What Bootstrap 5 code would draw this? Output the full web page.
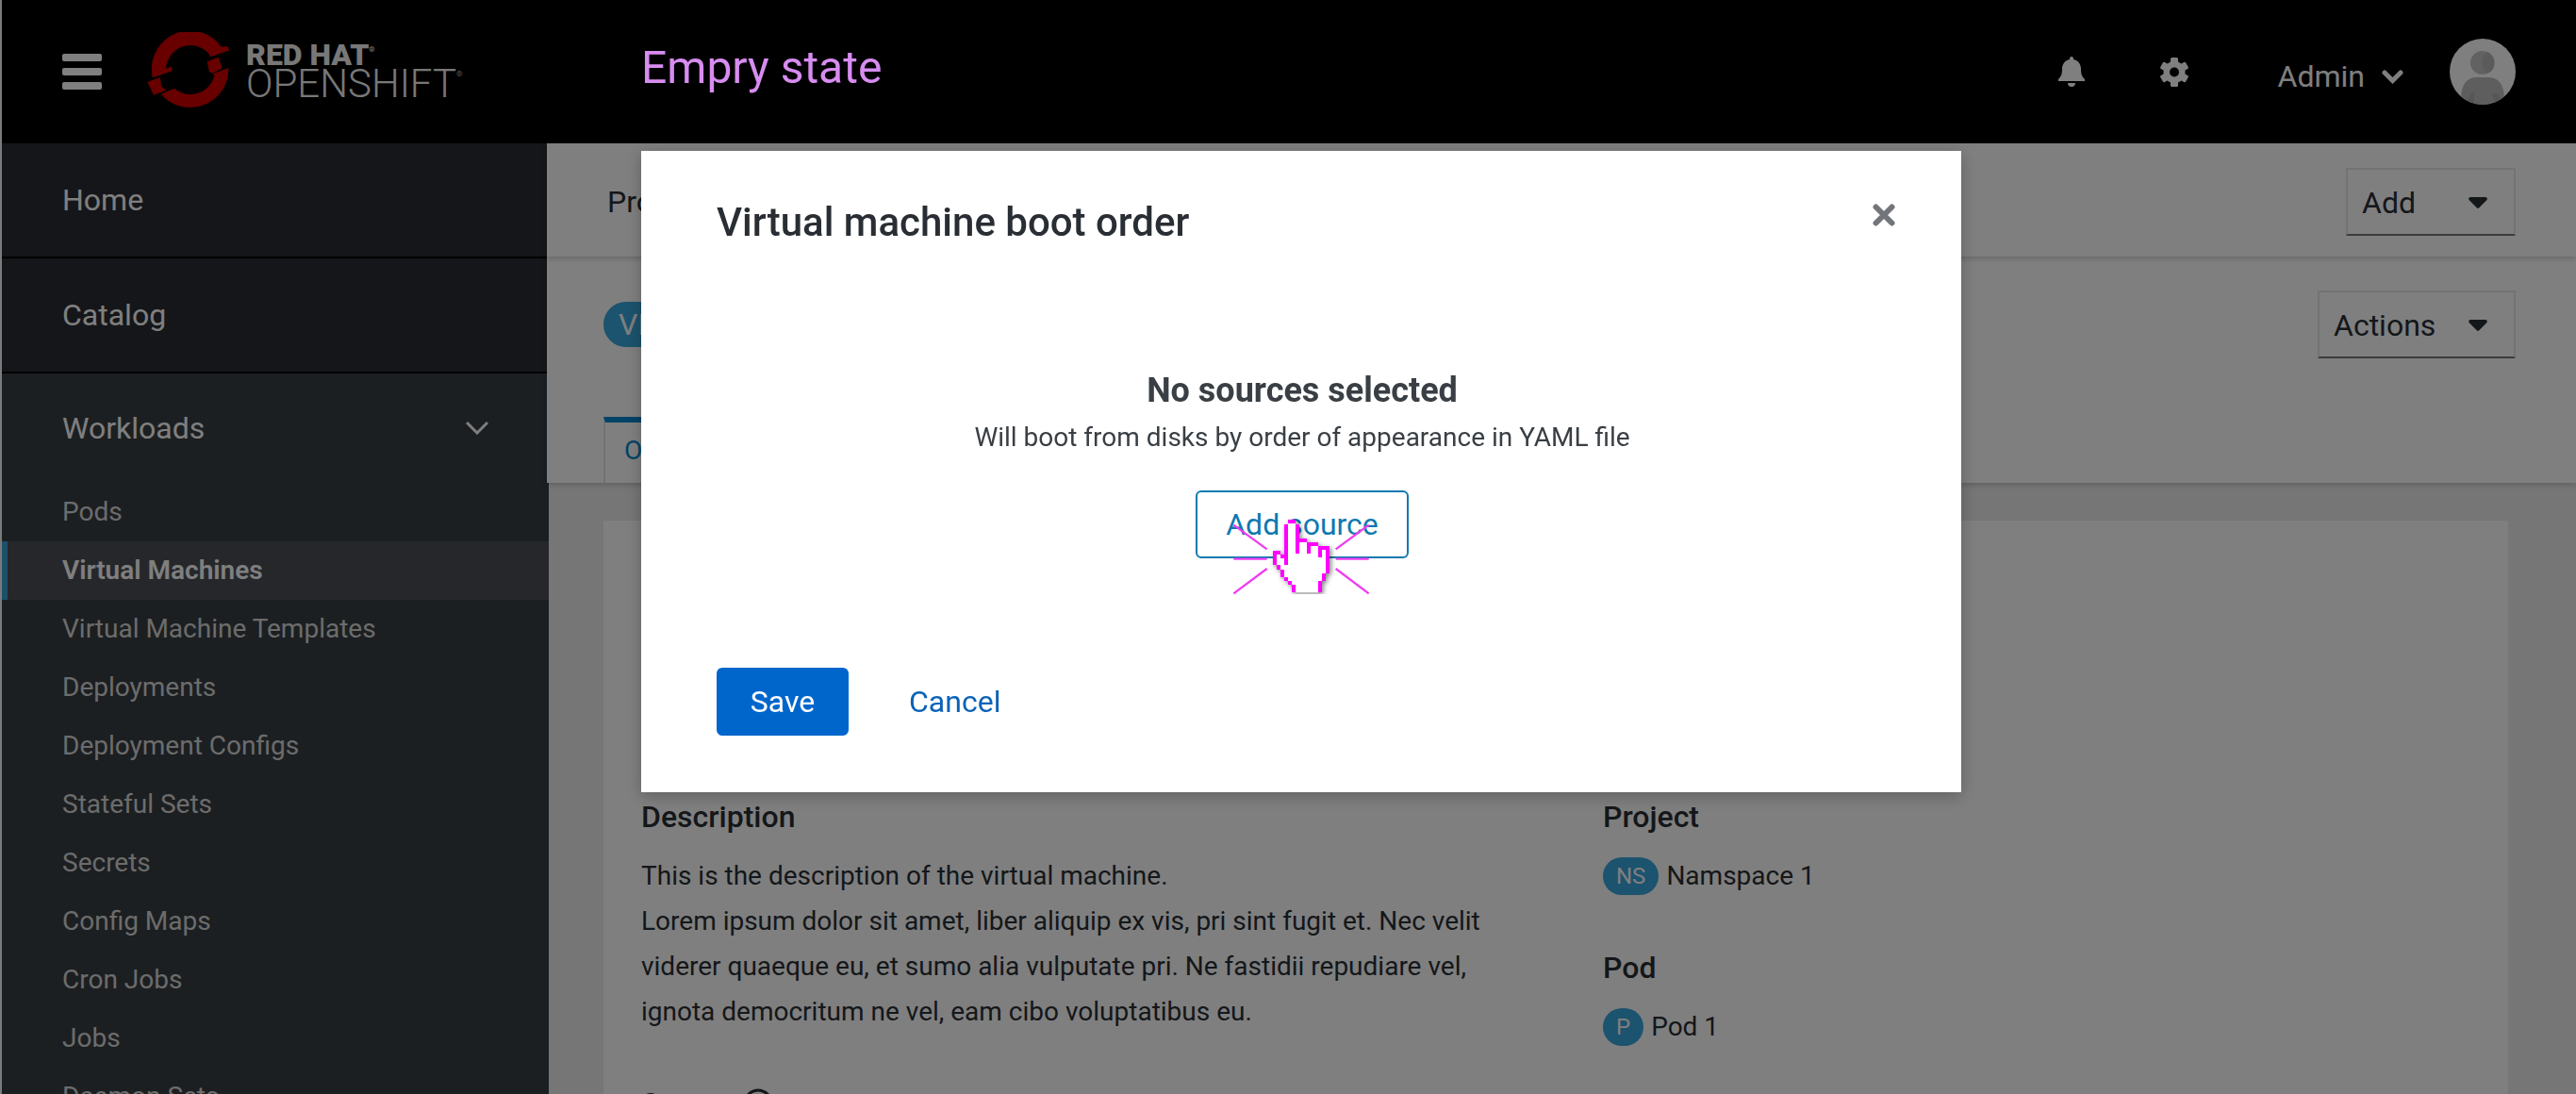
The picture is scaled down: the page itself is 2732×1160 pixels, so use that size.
<!DOCTYPE html>
<html lang="en">
<head>
<meta charset="utf-8">
<meta name="viewport" content="width=device-width, initial-scale=1">
<title>Virtual machine boot order</title>
<link href="https://cdn.jsdelivr.net/npm/bootstrap@5.3.0/dist/css/bootstrap.min.css" rel="stylesheet">
<style>
  body { font-family: Roboto, "Liberation Sans", sans-serif; font-size: 28px; line-height: 48px; color: #292e34; background: #ececec; }
  a { text-decoration: none; }
  svg { display: block; flex: none; }
  .app-shell { height: 100vh; border-left: 2px solid #f4f6f6; }

  /* masthead */
  .masthead { height: 152px; padding: 0 64px; background: #000; color: #fff; }
  .masthead button { background: none; border: 0; padding: 0; color: #fff; }
  .brand { margin-left: 47px; gap: 16px; color: #f0f0f0; }
  .brand-top { font-size: 32px; font-weight: 900; line-height: 26px; }
  .brand-name { font-size: 42px; font-weight: 300; line-height: 36px; }
  .reg { font-size: 8px; vertical-align: top; line-height: 16px; }
  .tools { gap: 80px; }
  .user-btn { gap: 18px; margin-left: 15px; padding-top: 10px !important; font-size: 32px; }
  .avatar { margin-left: -31px; }

  /* sidebar */
  .side { width: 580px; flex: none; background: #383e42; color: #fff; }
  .side a { color: inherit; padding: 0 64px; }
  .side-top { height: 122px; font-size: 32px; background: #2a2c32; border-bottom: 2px solid #000; }
  .side-group { height: 116px; font-size: 32px; }
  .side-sub { height: 62px; color: #d8d8d8 !important; }
  .side-sub.current { background: #4c4e56; color: #fff !important; font-weight: 600; border-left: 6px solid #38a0d2; padding-left: 58px; }

  /* content */
  .bar { margin-left: -2px; padding: 0 64px 0 60px; background: #fff; position: relative; box-shadow: 0 2px 6px rgba(0,0,0,.2); }
  .project-bar { height: 120px; font-size: 32px; z-index: 1; padding-left: 64px; padding-top: 4px; }
  .vm-bar { height: 240px; padding-top: 36px; }
  .menu-btn { height: 72px; padding: 2px 28px 0 15px; font-size: 32px; background: #fff; color: #292e34; border: 2px solid #e6e6e6; border-bottom-color: #72767b; }
  .menu-add { width: 180px; }
  .menu-actions { width: 210px; }
  .kind { background: #38a6dc; color: #fff; border-radius: 24px; height: 40px; line-height: 40px; min-width: 43px; padding: 0 14px; font-size: 24px; text-align: center; }
  .kind-lg { height: 48px; line-height: 48px; padding: 0 16px; font-size: 32px; }
  .tab-item { height: 70px; padding: 0 20px; border-top: 6px solid #0088ce; border-left: 2px solid #e6e6e6; color: #0088ce; line-height: 60px; }
  .overview { margin: 40px 72px 0 58px; background: #fff; }
  .overview-body { padding: 294px 40px 60px; }
  .overview-body h3 { font-size: 32px; font-weight: 500; line-height: 40px; margin: 0 0 19px; }
  .fact { margin-bottom: 53px; }
  .desc-col { width: 1020px; flex: none; padding-right: 100px; }

  /* dialog */
  .modal-backdrop { opacity: .5; }
  .boot-modal { overflow: hidden; }
  .boot-modal .modal-dialog { max-width: 1400px; margin: 0 0 0 680px; padding-top: 44px; }
  .state-label { font-size: 48px; font-weight: 400; line-height: 56px; color: #d78cf0; margin: 0 0 60px; }
  .boot-modal .modal-content { border: 0; border-radius: 0; box-shadow: 0 4px 16px rgba(0,0,0,.25); padding: 52px 70px 60px 80px; color: #292e34; }
  .boot-title { font-size: 42px; font-weight: 500; line-height: 48px; margin: 0; }
  .close-btn { border: 0; background: none; padding: 0; height: 32px; color: #72767b; }
  .empty-state { padding: 130px 0 116px; margin-right: 8px; color: #393f44; }
  .empty-state h2 { font-size: 36px; font-weight: 700; line-height: 48px; margin: 0 0 2px; }
  .empty-state p { margin: 0 0 32px; }
  .act { height: 72px; font-size: 32px; line-height: 48px; border-radius: 6px; }
  .act-outline { width: 226px; border: 2px solid #0f79b0; color: #0f79b0; background: #fff; padding: 0; }
  .act-save { width: 140px; background: #06c; color: #fff; padding: 0; }
  .act-link { padding: 0; margin-left: 64px; color: #0b62b8; border: 0; }
  .pointer { position: absolute; left: 36px; top: 30px; pointer-events: none; }
</style>
<script src="https://cdn.jsdelivr.net/npm/bootstrap@5.3.0/dist/js/bootstrap.bundle.min.js"></script>
</head>
<body class="overflow-hidden">
<div class="app-shell d-flex flex-column overflow-hidden">
  <header class="masthead d-flex align-items-center flex-shrink-0">
    <button type="button" aria-label="Toggle navigation">
      <svg width="42" height="38" viewBox="0 0 42 38" fill="currentColor"><rect width="42" height="8" rx="2"/><rect y="15" width="42" height="8" rx="2"/><rect y="30" width="42" height="8" rx="2"/></svg>
    </button>
    <a class="brand d-flex align-items-center" href="#" aria-label="Red Hat OpenShift">
      <svg width="90" height="84" viewBox="50 41 270 252" fill="#d00000">
        <path d="M68 170A122 122 0 0 1 289 88L308 86L315 99L255 120L247 107A78 78 0 0 0 113 158L130 150L132 165L90 180L70 186Z"/>
        <path d="M244 135L280 121L292 156L262 172L251 168Z"/>
        <path d="M263 174L312 155A122 122 0 0 1 97 238L136 222L141 221A78 78 0 0 0 267 180Z"/>
        <path d="M54 200L95 185L98 213L114 226L74 241Z"/>
      </svg>
      <span class="d-flex flex-column">
        <span class="brand-top">RED HAT<span class="reg">®</span></span>
        <span class="brand-name">OPENSHIFT<span class="reg">®</span></span>
      </span>
    </a>
    <div class="tools d-flex align-items-center ms-auto">
      <button type="button" aria-label="Notifications">
        <svg width="28" height="32" viewBox="0 0 28 32" fill="currentColor"><path d="M12 2a2 2 0 0 1 4 0v1c5 1 8 5 8 10 0 6 1 8 4 11v2H0v-2c3-3 4-5 4-11C4 8 7 4 12 3zM10 28h8a4 4 0 0 1-8 0z"/></svg>
      </button>
      <button type="button" aria-label="Settings">
        <svg width="30" height="31" viewBox="-15 -15.5 30 31" fill="currentColor"><circle r="11.500"/><rect x="-4" y="-15.500" width="8" height="31" rx="1.500"/><rect x="-4" y="-15.500" width="8" height="31" rx="1.500" transform="rotate(60)"/><rect x="-4" y="-15.500" width="8" height="31" rx="1.500" transform="rotate(120)"/><circle r="5" fill="#000"/></svg>
      </button>
      <button type="button" class="user-btn d-flex align-items-center">Admin
        <svg width="23" height="15" viewBox="0 0 23 15" fill="none" stroke="currentColor" stroke-width="5" stroke-linecap="round"><path d="M3 3l8.500 8.500L20 3"/></svg>
      </button>
      <svg class="avatar" width="70" height="70" viewBox="0 0 70 70"><defs><clipPath id="face"><circle cx="35" cy="35" r="35"/></clipPath></defs><g clip-path="url(#face)"><rect width="70" height="70" fill="#fff"/><circle cx="34.500" cy="25.500" r="12.500" fill="#c4c4c4"/><path d="M40 14a12.500 12.500 0 0 1 0 23c-8-6-8-17 0-23z" fill="#b6b6b6"/><path d="M12 62c1-16 8-21 17-21h12c10 0 16 6 17 21v10H12z" fill="#bcbcbc"/><path d="M20 70c-1-6 1-12 6-13v13zM45 58c8-2 10 4 8 12h-5z" fill="#acacac"/></g></svg>
    </div>
  </header>

  <div class="d-flex flex-grow-1 overflow-hidden">
    <nav class="side overflow-hidden">
      <a class="side-top d-flex align-items-center" href="#">Home</a>
      <a class="side-top d-flex align-items-center" href="#">Catalog</a>
      <a class="side-group d-flex align-items-center justify-content-between" href="#">Workloads
        <svg width="24" height="14" viewBox="0 0 24 14" fill="none" stroke="currentColor" stroke-width="3"><path d="M1 1l11 11L23 1"/></svg>
      </a>
      <a class="side-sub d-flex align-items-center" href="#">Pods</a>
      <a class="side-sub current d-flex align-items-center" href="#" aria-current="page">Virtual Machines</a>
      <a class="side-sub d-flex align-items-center" href="#">Virtual Machine Templates</a>
      <a class="side-sub d-flex align-items-center" href="#">Deployments</a>
      <a class="side-sub d-flex align-items-center" href="#">Deployment Configs</a>
      <a class="side-sub d-flex align-items-center" href="#">Stateful Sets</a>
      <a class="side-sub d-flex align-items-center" href="#">Secrets</a>
      <a class="side-sub d-flex align-items-center" href="#">Config Maps</a>
      <a class="side-sub d-flex align-items-center" href="#">Cron Jobs</a>
      <a class="side-sub d-flex align-items-center" href="#">Jobs</a>
      <a class="side-sub d-flex align-items-center" href="#">Daemon Sets</a>
    </nav>

    <main class="flex-grow-1">
      <div class="bar project-bar d-flex align-items-center justify-content-between">
        <span>Project</span>
        <button type="button" class="menu-btn menu-add d-flex align-items-center justify-content-between">Add
          <svg width="20" height="12" viewBox="0 0 20 12" fill="currentColor"><path d="M2 0h16a2 2 0 0 1 1.500 3l-8 8a2 2 0 0 1-3 0l-8-8A2 2 0 0 1 2 0z"/></svg>
        </button>
      </div>
      <div class="bar vm-bar d-flex flex-column justify-content-between">
        <div class="d-flex align-items-center justify-content-between">
          <span class="kind kind-lg">VM</span>
          <button type="button" class="menu-btn menu-actions d-flex align-items-center justify-content-between">Actions
            <svg width="20" height="12" viewBox="0 0 20 12" fill="currentColor"><path d="M2 0h16a2 2 0 0 1 1.500 3l-8 8a2 2 0 0 1-3 0l-8-8A2 2 0 0 1 2 0z"/></svg>
          </button>
        </div>
        <div class="d-flex"><a class="tab-item" href="#">Overview</a></div>
      </div>

      <section class="overview">
        <div class="overview-body d-flex">
          <div class="desc-col">
            <div class="fact">
              <h3>Description</h3>
              <div>This is the description of the virtual machine.<br>Lorem ipsum dolor sit amet, liber aliquip ex vis, pri sint fugit et. Nec velit viderer quaeque eu, et sumo alia vulputate pri. Ne fastidii repudiare vel, ignota democritum ne vel, eam cibo voluptatibus eu.</div>
            </div>
            <div class="fact d-flex gap-3">
              <h3>Status</h3>
              <svg width="32" height="36" viewBox="0 0 32 36" fill="none" stroke="currentColor" stroke-width="3"><circle cx="16" cy="20" r="14"/></svg>
            </div>
          </div>
          <div>
            <div class="fact">
              <h3>Project</h3>
              <div class="d-flex align-items-center gap-2"><span class="kind">NS</span><span>Namspace 1</span></div>
            </div>
            <div class="fact">
              <h3>Pod</h3>
              <div class="d-flex align-items-center gap-2"><span class="kind">P</span><span>Pod 1</span></div>
            </div>
          </div>
        </div>
      </section>
    </main>
  </div>
</div>

<div class="modal-backdrop"></div>
<div class="modal boot-modal d-block" tabindex="-1" role="dialog" aria-labelledby="bootTitle">
  <div class="modal-dialog">
    <p class="state-label">Empry state</p>
    <div class="modal-content">
      <div class="d-flex align-items-start justify-content-between">
        <h1 class="boot-title" id="bootTitle">Virtual machine boot order</h1>
        <button type="button" class="close-btn" aria-label="Close">
          <svg width="24" height="24" viewBox="0 0 24 24" fill="none" stroke="currentColor" stroke-width="6" stroke-linecap="round"><path d="M3.500 3.500l17 17M20.500 3.500l-17 17"/></svg>
        </button>
      </div>
      <div class="empty-state text-center">
        <h2>No sources selected</h2>
        <p>Will boot from disks by order of appearance in YAML file</p>
        <div class="d-inline-block position-relative align-top">
          <button type="button" class="btn act act-outline d-block">Add source</button>
          <svg class="pointer" width="152" height="82" viewBox="312 210 456 246">
            <defs><filter id="handShade" x="-30%" y="-20%" width="160%" height="140%"><feDropShadow dx="5" dy="5" stdDeviation="8" flood-color="#000" flood-opacity=".5"/></filter>
            <clipPath id="handCut"><rect x="312" y="210" width="456" height="240"/></clipPath></defs>
            <path d="M325 230L431 307M325 338H431M325 448L431 369M650 307L755 230M650 338H755M650 369L755 448" stroke="#f03cf0" stroke-width="7" fill="none"/>
            <g clip-path="url(#handCut)" shape-rendering="crispEdges">
              <path filter="url(#handShade)" fill="#fff" d="M498 214H522V228H534V272H558V285H594V296H630V383H618V408H606V443H510V420H498V408H486V395H474V371H462V358H450V312H474V324H486V228H498Z"/>
              <path fill="#f0f" d="M498 214h24v12h-24zM486 228h12v130h-12zM522 228h12v94h-12zM534 272h24v13h-24zM558 285h36v12h-24v25h-12zM594 296h36v87h-12v-75h-12v24h-12zM606 383h12v25h-12zM594 408h12v35h-12zM450 312h24v12h12v12h-12v-12h-12v34h-12zM462 358h12v13h-12zM474 371h12v24h-12zM486 395h12v13h-12zM498 408h12v12h-12zM510 420h12v23h-12z"/>
              <path fill="#bbb" d="M522 443h72v6h-72z"/>
            </g>
          </svg>
        </div>
      </div>
      <div class="d-flex align-items-center">
        <button type="button" class="btn act act-save">Save</button>
        <button type="button" class="btn act act-link">Cancel</button>
      </div>
    </div>
  </div>
</div>
</body>
</html>
